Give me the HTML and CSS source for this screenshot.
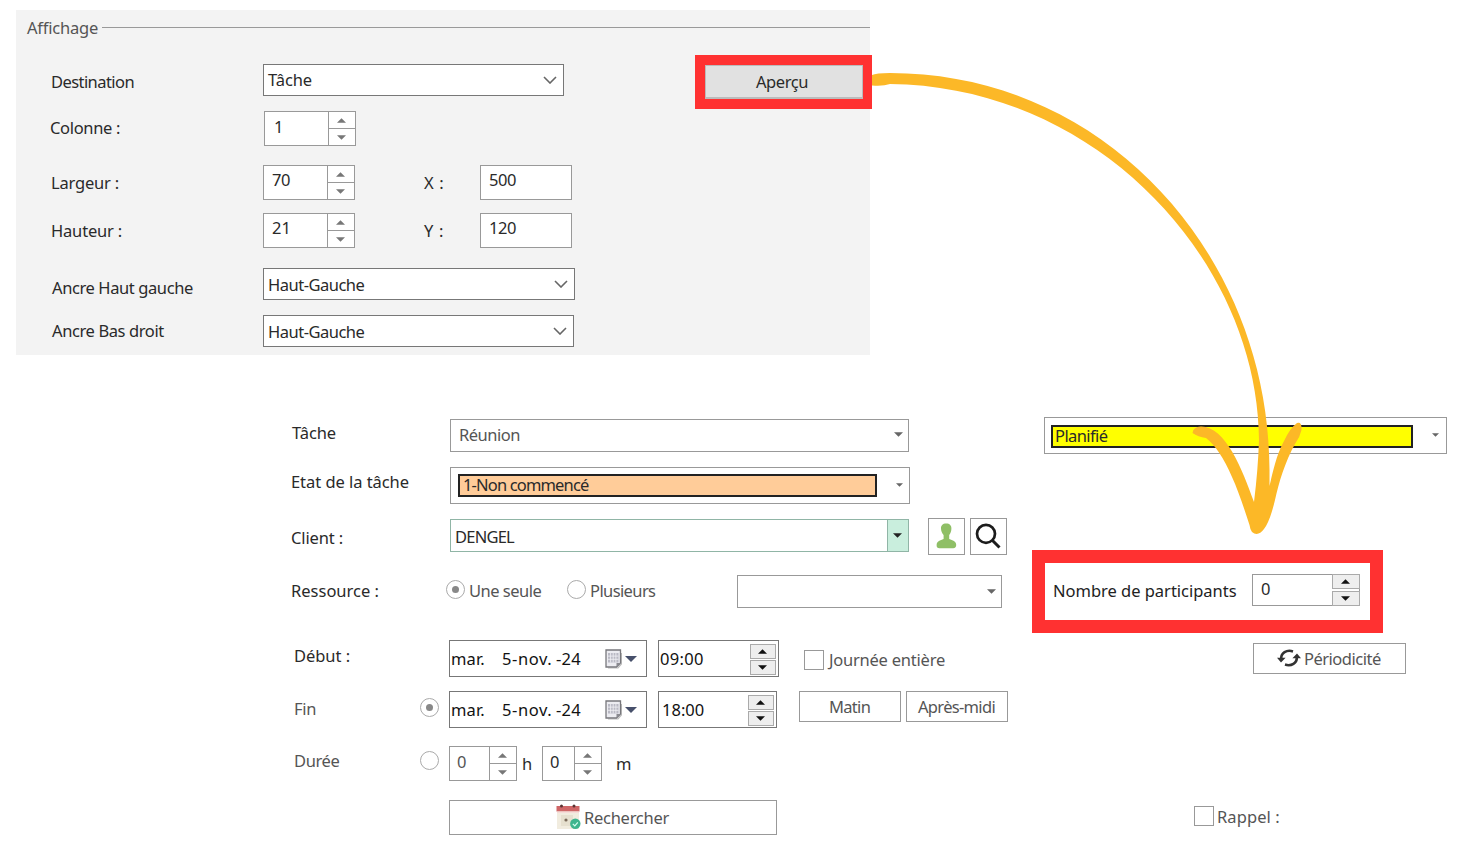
FILE: index.html
```html
<!DOCTYPE html>
<html lang="fr">
<head>
<meta charset="utf-8">
<title>Affichage</title>
<link rel="stylesheet" href="styles.css">
</head>
<body>
<svg class="defs" width="0" height="0">
  <symbol id="chev" viewBox="0 0 14 8"><path d="M1 1l6 6 6-6" fill="none" stroke="#666" stroke-width="1.6"/></symbol>
  <symbol id="dn" viewBox="0 0 10 5"><path d="M0 0h10L5 5z"/></symbol>
  <symbol id="up" viewBox="0 0 10 5"><path d="M0 5h10L5 0z"/></symbol>
  <symbol id="cal" viewBox="0 0 17 20"><path d="M3 19h10l3.400-4V4" fill="none" stroke="#bbb" stroke-width="1.2"/><path d="M1 1h14.500v13L11.500 18H1z" fill="#ececf1" stroke="#77777c" stroke-width="1.3"/><path d="M3 4h10.500v9.500H3z" fill="#b9b9c4"/><path d="M3 7.100h10.500M3 10.300h10.500M5.600 4v9.500M8.200 4v9.500M10.900 4v9.500" stroke="#f2f2f6" stroke-width=".8"/><path d="M11.500 18v-4h4z" fill="#8a8a90"/></symbol>
</svg>

<section class="panel">
  <div class="legend"><span class="t w-affichage">Affichage</span><i class="rule"></i></div>
  <div class="row p1">
    <span class="t lab w-dest">Destination</span>
    <div class="box combo"><span class="t w-tache">Tâche</span><svg class="chev"><use href="#chev"/></svg></div>
    <div class="hot"><button class="push"><span class="t w-apercu">Aperçu</span></button></div>
  </div>
  <div class="row p2">
    <span class="t lab w-col">Colonne :</span>
    <div class="box spin"><span class="t w-1">1</span><div class="arrows"><b><svg><use href="#up"/></svg></b><b><svg><use href="#dn"/></svg></b></div></div>
  </div>
  <div class="row p3">
    <span class="t lab w-larg">Largeur :</span>
    <div class="box spin"><span class="t w-70">70</span><div class="arrows"><b><svg><use href="#up"/></svg></b><b><svg><use href="#dn"/></svg></b></div></div>
    <span class="t lab xy">X :</span>
    <div class="box num"><span class="t w-500">500</span></div>
  </div>
  <div class="row p4">
    <span class="t lab w-haut">Hauteur :</span>
    <div class="box spin"><span class="t w-21">21</span><div class="arrows"><b><svg><use href="#up"/></svg></b><b><svg><use href="#dn"/></svg></b></div></div>
    <span class="t lab xy">Y :</span>
    <div class="box num"><span class="t w-500">120</span></div>
  </div>
  <div class="row p5">
    <span class="t lab w-ahg">Ancre Haut gauche</span>
    <div class="box combo"><span class="t w-hg">Haut-Gauche</span><svg class="chev"><use href="#chev"/></svg></div>
  </div>
  <div class="row p6">
    <span class="t lab w-abd">Ancre Bas droit</span>
    <div class="box combo"><span class="t w-hg">Haut-Gauche</span><svg class="chev"><use href="#chev"/></svg></div>
  </div>
</section>

<section class="form">
  <div class="row f1">
    <span class="t lab w-tache">Tâche</span>
    <div class="box list"><span class="t w-reunion dim">Réunion</span><svg class="tri"><use href="#dn"/></svg></div>
    <div class="box status"><div class="tag yellow"><span class="t w-plan">Planifié</span></div><svg class="tri sm"><use href="#dn"/></svg></div>
  </div>
  <div class="row f2">
    <span class="t lab w-etat">Etat de la tâche</span>
    <div class="box status"><div class="tag orange"><span class="t w-nc">1-Non commencé</span></div><svg class="tri sm"><use href="#dn"/></svg></div>
  </div>
  <div class="row f3">
    <span class="t lab w-client">Client :</span>
    <div class="box client"><span class="t w-dengel">DENGEL</span><div class="drop"><svg class="tri dark"><use href="#dn"/></svg></div></div>
    <div class="box ico"><svg width="21" height="26" viewBox="0 0 21 26"><path d="M10.200.5c3.500 0 5.400 2 5.200 5.200-.1 2.700-.9 4.600-2.200 6.200v4.200c3.500 1.300 6.800 2.200 7 5.600.1 2.300-1 3.500-3 3.500H3.500c-2 0-3-1.200-2.900-3.300.3-3.600 3.600-4.500 7-5.800v-4.200C6.200 10.300 5.200 8.400 5 5.700 4.800 2.500 6.700.5 10.200.5z" fill="#8fbf66"/></svg></div>
    <div class="box ico"><svg width="26" height="26" viewBox="0 0 26 26"><circle cx="11" cy="10.800" r="9" fill="none" stroke="#1c1c1c" stroke-width="2.700"/><path d="M17 17l7.500 7.500" stroke="#1c1c1c" stroke-width="3"/></svg></div>
  </div>
  <div class="row f4">
    <span class="t lab w-res">Ressource :</span>
    <i class="radio on"></i><span class="t lab dim w-une">Une seule</span>
    <i class="radio"></i><span class="t lab dim w-plus">Plusieurs</span>
    <div class="box list"><svg class="tri"><use href="#dn"/></svg></div>
    <div class="hot2"><span class="t w-nombre">Nombre de participants</span>
      <div class="count"><span class="t w-0">0</span><div class="keys"><b><svg><use href="#up"/></svg></b><b><svg><use href="#dn"/></svg></b></div></div>
    </div>
  </div>
  <div class="row f5">
    <span class="t lab w-debut">Début :</span>
    <div class="box date"><span class="t w-mar">mar.</span><span class="t w-nov">5-nov.</span><span class="t w-24">-24</span><svg class="cal"><use href="#cal"/></svg><svg class="tri blue"><use href="#dn"/></svg></div>
    <div class="box time"><span class="t w-09">09:00</span><div class="keys"><b><svg><use href="#up"/></svg></b><b><svg><use href="#dn"/></svg></b></div></div>
    <i class="check"></i><span class="t lab dim w-jour">Journée entière</span>
    <button class="box btn"><svg width="24" height="20" viewBox="0 0 24 20"><path d="M4.200 10.500C4 5 9.500 1.400 16 3.400M19.800 9.500c.2 5.500-5.300 9.100-11.800 7.100" fill="none" stroke="#333" stroke-width="2.600"/><path d="M0 9.800h8.600L4 14.600zM15.400 10.200H24L20 5.400z" fill="#333"/></svg><span class="t dim w-per">Périodicité</span></button>
  </div>
  <div class="row f6">
    <span class="t lab dim w-fin">Fin</span>
    <i class="radio on"></i>
    <div class="box date"><span class="t w-mar">mar.</span><span class="t w-nov">5-nov.</span><span class="t w-24">-24</span><svg class="cal"><use href="#cal"/></svg><svg class="tri blue"><use href="#dn"/></svg></div>
    <div class="box time"><span class="t w-18">18:00</span><div class="keys"><b><svg><use href="#up"/></svg></b><b><svg><use href="#dn"/></svg></b></div></div>
    <button class="box btn"><span class="t dim w-matin">Matin</span></button>
    <button class="box btn"><span class="t dim w-apm">Après-midi</span></button>
  </div>
  <div class="row f7">
    <span class="t lab dim w-duree">Durée</span>
    <i class="radio"></i>
    <div class="box spin"><span class="t dim w-0">0</span><div class="arrows"><b><svg><use href="#up"/></svg></b><b><svg><use href="#dn"/></svg></b></div></div>
    <span class="t lab w-h">h</span>
    <div class="box spin"><span class="t w-0">0</span><div class="arrows"><b><svg><use href="#up"/></svg></b><b><svg><use href="#dn"/></svg></b></div></div>
    <span class="t lab w-m">m</span>
  </div>
  <div class="row f8">
    <button class="box btn"><svg width="25" height="26" viewBox="0 0 25 26"><path d="M1 6h22v19H1z" fill="#f1ecdf"/><path d="M.5 2h23v5.500H.5z" fill="#cf6667"/><path d="M1 7.500h22V9H1z" fill="#f6dcd8"/><circle cx="5.500" cy="2" r="1.500" fill="#5a3434"/><circle cx="18" cy="2" r="1.500" fill="#5a3434"/><path d="M5 11h12v11H5z" fill="#e6e0cf"/><circle cx="10" cy="16" r="1.600" fill="#7a6a5a"/><circle cx="19.300" cy="19.800" r="5.200" fill="#3fb58e"/><path d="M16.800 19.800l2 2 3-3.500" fill="none" stroke="#d8fff0" stroke-width="1.200"/></svg><span class="t dim w-rech">Rechercher</span></button>
    <i class="check"></i><span class="t lab dim w-rappel">Rappel :</span>
  </div>
</section>

<svg class="arrow" width="1460" height="847" viewBox="0 0 1460 847"><path d="M872 75Q876 73 890 73C1105 73 1269 255 1269.500 470L1269.500 486C1272 476 1276 455 1284 441Q1290 428 1297 423Q1302 421 1301.500 430Q1300 437 1295 444C1285 462 1279 482 1275 500Q1270 521 1264 529Q1258 537 1252 532Q1250 529 1249.500 525C1244 508 1238 490 1232 477Q1220 449 1206 438Q1198 437 1192.500 433Q1193 427 1201 426.500C1226 427 1242 469 1254 502Q1258 470 1259 440C1258 262 1098 86 890 84Q883 86.500 872 85.500Z" fill="#fcb827"/></svg>
</body>
</html>
```
FILE: styles.css
```css
* { box-sizing: border-box; }
body { margin: 0; width: 1460px; height: 847px; overflow: hidden; background: #fff; position: relative; font-family: "Noto Sans", "DejaVu Sans", sans-serif; font-size: 16.5px; color: #2a2a2a; }
.defs { position: absolute; }
button { font: inherit; color: inherit; padding: 0; margin: 0; }
.t { display: block; flex: none; line-height: 18px; height: 20px; white-space: nowrap; }
.dim { color: #555; }
.row { display: flex; align-items: flex-start; }
.box { flex: none; display: flex; align-items: flex-start; background: #fff; border: 1px solid #999; border-radius: 0; }
.chev { width: 14px; height: 8px; flex: none; margin: 11px 6px 0 auto; }
.tri { width: 9px; height: 5px; fill: #666; flex: none; margin-left: auto; }
.tri.sm { width: 7px; height: 4px; }
.tri.dark { fill: #222; }
.tri.blue { width: 12px; height: 6px; fill: #47506b; }

/* Settings panel */
.panel { width: 854px; height: 345px; margin: 10px 0 0 16px; background: #f3f3f3; overflow: visible; }
.legend { display: flex; height: 54px; padding: 9px 0 0 11px; color: #555; }
.rule { height: 1px; background: #999; margin: 8px 0 0 4px; flex: 1; }
.panel .combo, .date, .time { border-color: #777; }
.p1 { height: 47px; }
.p1 .lab { margin: 9px 0 0 35px; }
.p1 .combo { width: 301px; height: 32px; margin-left: 129px; padding-left: 4px; }
.p1 .combo .t { margin-top: 6px; }
.hot { flex: none; width: 177px; height: 54px; margin: -9px 0 0 131px; border: 10px solid #ff3131; border-right-width: 9px; background: #e1e1e1; display: flex; }
.push { flex: 1; height: 34px; border: 1px solid #bbb; border-width: 1px 1px 2px; background: #e1e1e1; padding-left: 50px; }
.push .t { margin-top: 1px; text-align: left; line-height: 20px; }
.spin { height: 35px; }
.arrows { width: 27px; height: 33px; margin-left: auto; border-left: 1px solid #999; display: flex; flex-direction: column; }
.arrows b { flex: 1; display: flex; align-items: center; justify-content: center; }
.arrows b + b { border-top: 1px solid #999; }
.arrows svg { width: 9px; height: 5px; fill: #777; margin-right: 2px; }
.p2 { height: 54px; }
.p2 .lab { margin: 8px 0 0 34px; }
.p2 .spin { width: 92px; margin-left: 144px; padding-left: 9px; }
.p2 .spin .t { margin-top: 6px; }
.p3, .p4 { height: 48px; }
.p3 .lab, .p4 .lab { margin: 9px 0 0 35px; }
.p3 .spin, .p4 .spin { width: 92px; padding-left: 8px; }
.p3 .spin { margin-left: 144px; }
.p4 .spin { margin-left: 141px; }
.p3 .box .t, .p4 .box .t { margin-top: 5px; }
.p3 .xy, .p4 .xy { margin-left: 69px; width: 20px; letter-spacing: .7px; }
.num { width: 92px; height: 35px; margin-left: 36px; padding-left: 8px; }
.p4 { height: 55px; }
.p5 { height: 47px; }
.p5 .lab { margin: 11px 0 0 36px; }
.p5 .combo { width: 312px; height: 32px; margin-left: 70px; padding-left: 4px; }
.p5 .combo .t { margin-top: 7px; }
.p6 .lab { margin: 7px 0 0 36px; }
.p6 .combo { width: 311px; height: 32px; margin-left: 99px; padding-left: 4px; }
.p6 .combo .t { margin-top: 7px; }

/* Task form */
.form { padding-top: 62px; }
.f1 { height: 50px; }
.f1 .lab { margin: 7px 0 0 292px; }
.f1 .list { width: 459px; height: 33px; margin: 2px 0 0 114px; padding-left: 8px; }
.list .t { margin-top: 6px; }
.f1 .list .tri { margin: 12px 5px 0 auto; }
.status { height: 37px; }
.tag { height: 23px; border: 2px solid #222; display: flex; padding-left: 3px; }
.tag .t { margin-top: 0; }
.yellow { background: #ff0; width: 362px; margin: 7px 0 0 6px; }
.yellow .t { margin-left: -1px; }
.orange { background: #fc9; width: 419px; margin: 6px 0 0 7px; padding-left: 3px; }
.f1 .status { width: 403px; margin-left: 135px; }
.status .sm { margin: 15px 6px 0 auto; }
.f1 .status .sm { margin-right: 7px; }
.f2 { height: 51px; }
.f2 .lab { margin: 6px 0 0 291px; }
.f2 .status { width: 460px; margin-left: 41px; }
.f3 { height: 32px; }
.f3 .lab { margin: 11px 0 0 291px; }
.client { width: 459px; height: 33px; margin: 1px 0 0 107px; border-color: #90b5a6; padding-left: 4px; }
.client .t { margin-top: 8px; }
.drop { margin-left: auto; width: 21px; height: 31px; background: #c9eedd; border-left: 1px solid #90b5a6; }
.drop .tri { display: block; margin: 13px auto 0 5px; }
.ico { width: 37px; height: 37px; align-items: center; justify-content: center; margin-left: 19px; }
.ico svg { margin: -1px 1px 0 0; }
.ico + .ico { margin-left: 5px; }
.f4 { height: 90px; }
.f4 .lab { margin-top: 32px; }
.f4 .w-res { margin-left: 291px; }
.radio { flex: none; width: 19px; height: 19px; border: 1.5px solid #aaa; border-radius: 50%; background: #fff; display: flex; align-items: center; justify-content: center; }
.radio.on::after { content: ""; width: 7px; height: 7px; border-radius: 50%; background: #888; }
.f4 .radio { margin: 30px 0 0 67px; }
.f4 .w-une { margin-left: 4px; }
.f4 .w-une + .radio { margin-left: 25px; }
.f4 .w-plus { margin-left: 4px; }
.f4 .list { width: 265px; height: 33px; margin: 25px 0 0 81px; }
.f4 .list .tri { margin: 13px 5px 0 auto; }
.hot2 { flex: none; width: 351px; height: 83px; margin-left: 30px; border: 13px solid #ff3131; display: flex; padding-left: 8px; background: #fff; position: relative; z-index: 1; }
.hot2 > .t { margin-top: 19px; color: #222; }
.count { width: 108px; height: 32px; margin: 11px 0 0 16px; border: 1px solid #999; display: flex; padding-left: 8px; }
.count .t { margin-top: 5px; }
.keys { margin-left: auto; display: flex; flex-direction: column; gap: 1px; }
.keys b { width: 26px; height: 15px; border: 1px solid #aaa; background: #eee; display: flex; align-items: center; justify-content: center; }
.keys svg { width: 9px; height: 5px; fill: #111; margin-right: 1px; }
.count .keys { margin: -1px -1px -1px auto; gap: 2px; }
.count .keys b { width: 28px; }
.f5 { height: 51px; }
.f5 .w-debut { margin: 7px 0 0 294px; }
.date { width: 198px; height: 37px; padding-left: 1px; }
.f5 .date { margin-left: 99px; }
.date .t, .time .t { margin-top: 9px; color: #111; }
.date .w-nov { margin-left: 18px; }
.date .w-24 { margin-left: 4px; }
.cal { width: 17px; height: 20px; margin: 8px 0 0 24px; flex: none; }
.date .blue { margin: 15px 9px 0 auto; }
.time { width: 121px; height: 37px; margin-left: 11px; padding-left: 1px; }
.time .keys { margin: 3px 2px 0 auto; }
.check { flex: none; width: 20px; height: 20px; border: 1px solid #999; background: #fff; }
.f5 .check { margin: 10px 0 0 25px; }
.f5 .w-jour { margin: 11px 0 0 5px; }
.f5 .btn { width: 153px; height: 31px; margin: 3px 0 0 308px; padding-left: 23px; }
.f5 .btn svg { margin-top: 4px; }
.f5 .btn .t { margin: 6px 0 0 3px; text-align: left; }
.f6 { height: 55px; }
.f6 .w-fin { margin: 9px 0 0 294px; }
.f6 .radio { margin: 7px 0 0 104px; }
.f6 .date { margin-left: 10px; }
.f6 .time { width: 119px; padding-left: 3px; }
.f6 .btn { width: 102px; height: 31px; margin-left: 22px; padding-left: 29px; }
.f6 .btn + .btn { margin-left: 5px; padding-left: 11px; }
.f6 .btn .t { margin-top: 6px; text-align: left; }
.f7 { height: 54px; }
.f7 .w-duree { margin: 6px 0 0 294px; }
.f7 .radio { margin: 5px 0 0 81px; }
.f7 .spin { width: 68px; margin-left: 10px; padding-left: 7px; }
.f7 .spin .t { margin-top: 6px; }
.f7 .w-h { margin: 9px 0 0 5px; }
.f7 .w-h + .spin { width: 60px; padding-left: 7px; }
.f7 .w-m { margin: 9px 0 0 14px; }
.f8 .btn { width: 328px; height: 35px; margin-left: 449px; padding-left: 106px; }
.f8 .btn svg { margin-top: 3px; flex: none; }
.f8 .btn .t { margin: 8px 0 0 3px; text-align: left; }
.f8 .check { margin: 6px 0 0 417px; }
.f8 .w-rappel { margin: 8px 0 0 3px; }

/* Callout arrow between the two screens */
.arrow { position: absolute; left: 0; top: 0; z-index: 3; }

/* Text slots: width and tracking of each caption */
.w-affichage { width: 71px; letter-spacing: -.22px; }
.w-dest { width: 83px; letter-spacing: -.57px; }
.w-tache { width: 44px; letter-spacing: -.11px; }
.w-apercu { width: 52px; letter-spacing: -.43px; }
.w-col { width: 70px; letter-spacing: -.34px; }
.w-1 { width: 9px; }
.w-70 { width: 18px; letter-spacing: -.4px; }
.w-21 { width: 19px; }
.w-larg { width: 68px; letter-spacing: -.19px; }
.w-haut { width: 71px; letter-spacing: -.18px; }
.w-500 { width: 27px; letter-spacing: -.4px; }
.w-ahg { width: 141px; letter-spacing: -.4px; }
.w-abd { width: 112px; letter-spacing: -.39px; }
.w-hg { width: 97px; letter-spacing: -.5px; }
.w-reunion { width: 61px; letter-spacing: -.5px; }
.w-plan { width: 53px; letter-spacing: -.6px; }
.w-etat { width: 118px; letter-spacing: -.05px; }
.w-nc { width: 127px; letter-spacing: -.84px; }
.w-client { width: 52px; letter-spacing: -.15px; }
.w-dengel { width: 59px; letter-spacing: -.77px; }
.w-res { width: 88px; letter-spacing: 0; }
.w-une { width: 73px; letter-spacing: -.5px; }
.w-plus { width: 66px; letter-spacing: -.6px; }
.w-nombre { width: 183px; letter-spacing: -.02px; }
.w-0 { width: 9px; }
.w-debut { width: 56px; letter-spacing: -.05px; }
.w-mar { width: 33px; letter-spacing: .1px; }
.w-nov { width: 50px; letter-spacing: .6px; }
.w-24 { width: 25px; letter-spacing: .3px; }
.w-09 { width: 43px; letter-spacing: .3px; }
.w-18 { width: 42px; letter-spacing: 0; }
.w-jour { width: 116px; letter-spacing: -.23px; }
.w-per { width: 76px; letter-spacing: -.5px; }
.w-fin { width: 22px; letter-spacing: -.3px; }
.w-matin { width: 41px; letter-spacing: -.7px; }
.w-apm { width: 77px; letter-spacing: -.68px; }
.w-duree { width: 45px; letter-spacing: -.4px; }
.w-h { width: 10px; }
.w-m { width: 13px; letter-spacing: 0; }
.w-rech { width: 85px; letter-spacing: -.27px; }
.w-rappel { width: 63px; letter-spacing: .1px; }
```
